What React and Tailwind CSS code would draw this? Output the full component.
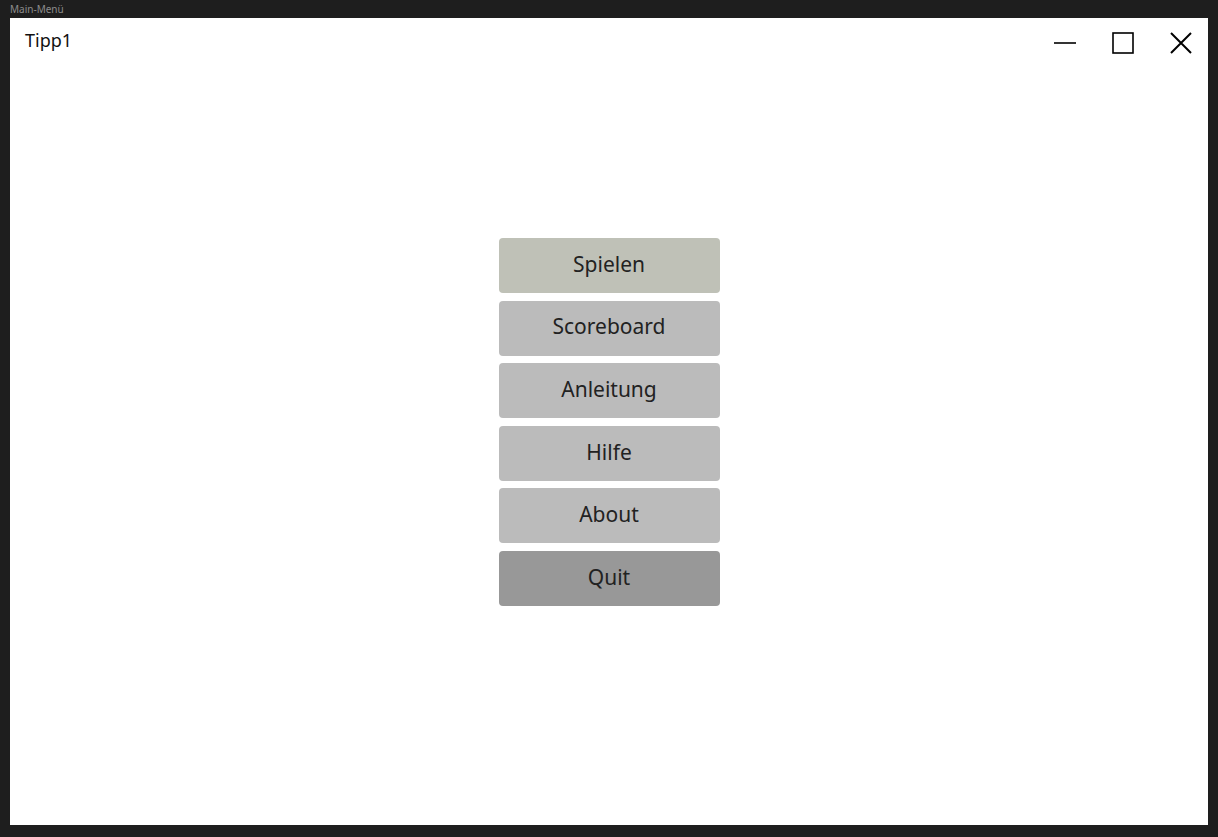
export default function App() {
  const buttons = [
    { label: 'Spielen', cls: 'bg-[#bfc1b7]' },
    { label: 'Scoreboard', cls: 'bg-[#bbbbbb]' },
    { label: 'Anleitung', cls: 'bg-[#bbbbbb]' },
    { label: 'Hilfe', cls: 'bg-[#bbbbbb]' },
    { label: 'About', cls: 'bg-[#bbbbbb]' },
    { label: 'Quit', cls: 'bg-[#989898]' },
  ];

  return (
    <div className="w-[1218px] h-[837px] bg-[#1e1e1e] flex flex-col font-['Noto_Sans',sans-serif]">
      <div className="h-[18px] pl-[10px] text-[10px] leading-[18px] text-[#8c8c8c]">Main-Menü</div>
      <div className="mx-[10px] h-[807px] bg-white flex flex-col">
        <div className="flex items-start justify-between h-[60px]">
          <span className="pl-[15px] pt-[10px] text-[18px] leading-[24px] text-[#111]">Tipp1</span>
          <div className="flex items-center gap-[36px] pt-[14px] pr-[16px]">
            <svg width="22" height="22" viewBox="0 0 22 22">
              <line x1="0" y1="11" x2="22" y2="11" stroke="#000" strokeWidth="1.6" />
            </svg>
            <svg width="22" height="22" viewBox="0 0 22 22">
              <rect x="1" y="1" width="20" height="20" fill="none" stroke="#000" strokeWidth="1.6" />
            </svg>
            <svg width="22" height="22" viewBox="0 0 22 22">
              <path d="M1 1 L21 21 M21 1 L1 21" stroke="#000" strokeWidth="2" />
            </svg>
          </div>
        </div>
        <div className="flex flex-col items-center gap-[7.6px] pt-[160px]">
          {buttons.map((b) => (
            <div
              key={b.label}
              className={`${b.cls} w-[221px] h-[55px] rounded-[4px] flex items-center justify-center pb-[2px] text-[21px] text-[#222]`}
            >
              {b.label}
            </div>
          ))}
        </div>
      </div>
    </div>
  );
}
